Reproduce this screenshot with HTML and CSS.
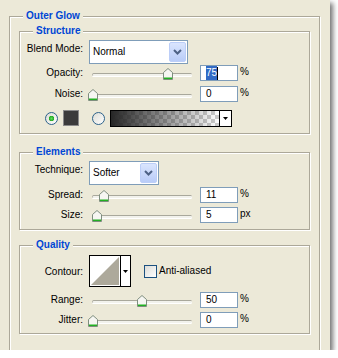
FILE: index.html
```html
<!DOCTYPE html>
<html>
<head>
<meta charset="utf-8">
<link rel="stylesheet" href="styles.css">
</head>
<body>
<div class="panel">
  <div class="group outer">
    <div class="legend">Outer Glow</div>

    <div class="group inner g-structure">
      <div class="legend">Structure</div>
      <div class="row row-select r-first">
        <span class="label">Blend Mode:</span>
        <div class="select w-blend"><span class="select-text">Normal</span><span class="select-btn"><svg width="9" height="6" viewBox="0 0 9 6"><path d="M1 1 L4.5 4.5 L8 1" fill="none" stroke="#4D6185" stroke-width="2"/></svg></span></div>
      </div>
      <div class="row row-slider r-opacity">
        <span class="label">Opacity:</span>
        <div class="slider"><div class="track"></div><svg class="thumb" style="left:75px" width="10" height="12" viewBox="0 0 10 12"><path d="M0.5 4.5 L5 0.5 L9.5 4.5 V11.5 H0.5 Z" fill="#F6F6F2" stroke="#7E8E7E"/><rect x="1" y="9.5" width="8" height="1.5" fill="#22B022"/></svg></div>
        <div class="input"><span class="sel">75</span><span class="caret"></span></div>
        <span class="unit">%</span>
      </div>
      <div class="row row-slider r-noise">
        <span class="label">Noise:</span>
        <div class="slider"><div class="track"></div><svg class="thumb" style="left:0px" width="10" height="12" viewBox="0 0 10 12"><path d="M0.5 4.5 L5 0.5 L9.5 4.5 V11.5 H0.5 Z" fill="#F6F6F2" stroke="#7E8E7E"/><rect x="1" y="9.5" width="8" height="1.5" fill="#22B022"/></svg></div>
        <div class="input">0</div>
        <span class="unit">%</span>
      </div>
      <div class="row row-color">
        <span class="radio checked"></span>
        <span class="swatch"></span>
        <span class="radio r2"></span>
        <div class="gradient"><span class="grad-fill"></span><span class="grad-btn"><svg width="5" height="3" viewBox="0 0 5 3"><path d="M0 0 H5 L2.5 3 Z" fill="#000"/></svg></span></div>
      </div>
    </div>

    <div class="group inner g-elements">
      <div class="legend">Elements</div>
      <div class="row row-select r-first">
        <span class="label">Technique:</span>
        <div class="select w-tech"><span class="select-text">Softer</span><span class="select-btn"><svg width="9" height="6" viewBox="0 0 9 6"><path d="M1 1 L4.5 4.5 L8 1" fill="none" stroke="#4D6185" stroke-width="2"/></svg></span></div>
      </div>
      <div class="row row-slider r-spread">
        <span class="label">Spread:</span>
        <div class="slider"><div class="track"></div><svg class="thumb" style="left:11px" width="10" height="12" viewBox="0 0 10 12"><path d="M0.5 4.5 L5 0.5 L9.5 4.5 V11.5 H0.5 Z" fill="#F6F6F2" stroke="#7E8E7E"/><rect x="1" y="9.5" width="8" height="1.5" fill="#22B022"/></svg></div>
        <div class="input">11</div>
        <span class="unit">%</span>
      </div>
      <div class="row row-slider r-size">
        <span class="label">Size:</span>
        <div class="slider"><div class="track"></div><svg class="thumb" style="left:4px" width="10" height="12" viewBox="0 0 10 12"><path d="M0.5 4.5 L5 0.5 L9.5 4.5 V11.5 H0.5 Z" fill="#F6F6F2" stroke="#7E8E7E"/><rect x="1" y="9.5" width="8" height="1.5" fill="#22B022"/></svg></div>
        <div class="input">5</div>
        <span class="unit">px</span>
      </div>
    </div>

    <div class="group inner g-quality">
      <div class="legend">Quality</div>
      <div class="row row-contour">
        <span class="label">Contour:</span>
        <div class="contour"><span class="contour-preview"><span class="contour-curve"></span></span><span class="contour-btn"><svg width="5" height="3" viewBox="0 0 5 3"><path d="M0 0 H5 L2.5 3 Z" fill="#000"/></svg></span></div>
        <span class="checkbox"></span>
        <span class="cb-label">Anti-aliased</span>
      </div>
      <div class="row row-slider r-range">
        <span class="label">Range:</span>
        <div class="slider"><div class="track"></div><svg class="thumb" style="left:49px" width="10" height="12" viewBox="0 0 10 12"><path d="M0.5 4.5 L5 0.5 L9.5 4.5 V11.5 H0.5 Z" fill="#F6F6F2" stroke="#7E8E7E"/><rect x="1" y="9.5" width="8" height="1.5" fill="#22B022"/></svg></div>
        <div class="input">50</div>
        <span class="unit">%</span>
      </div>
      <div class="row row-slider r-jitter">
        <span class="label">Jitter:</span>
        <div class="slider"><div class="track"></div><svg class="thumb" style="left:0px" width="10" height="12" viewBox="0 0 10 12"><path d="M0.5 4.5 L5 0.5 L9.5 4.5 V11.5 H0.5 Z" fill="#F6F6F2" stroke="#7E8E7E"/><rect x="1" y="9.5" width="8" height="1.5" fill="#22B022"/></svg></div>
        <div class="input">0</div>
        <span class="unit">%</span>
      </div>
    </div>
  </div>
</div>
</body>
</html>
```
FILE: styles.css
```css
* { box-sizing: border-box; }
html, body { margin: 0; padding: 0; background: #fff; }
body {
  font-family: "Liberation Sans", Arial, sans-serif;
  font-size: 10px;
  line-height: 12px;
  color: #000;
}
.panel {
  width: 330px;
  height: 350px;
  background: #ECE9D8;
  overflow: hidden;
  box-shadow: 3px 3px 5px rgba(0, 0, 0, 0.55);
}
.group {
  border: 1px solid #ACA899;
  box-shadow: 1px 1px 0 #fff, inset 1px 1px 0 #fff;
}
.outer {
  margin: 16px 0 0 9px;
  width: 311px;
  padding-bottom: 40px;
}
.inner { margin: 0 9px; }
.g-structure { margin-top: 9px; padding-bottom: 6px; }
.g-elements { margin-top: 18px; padding-bottom: 6px; }
.g-quality { margin-top: 15px; padding-bottom: 5px; }

.legend {
  width: fit-content;
  height: 12px;
  margin: -7px 0 0 13px;
  padding: 0 3px;
  background: #ECE9D8;
  color: #0046D5;
  font-weight: bold;
}

.row { display: flex; align-items: flex-start; }
.label { width: 63px; flex: none; text-align: right; }

/* select rows */
.row-select { height: 24px; }
.r-first { margin-top: 3px; }
.g-quality .row-contour { margin-top: 4px; }
.row-select .label { margin-top: 3px; }
.select {
  display: flex;
  align-items: center;
  height: 24px;
  margin-left: 6px;
  border: 1px solid #7F9DB9;
  background: #fff;
  padding-left: 3px;
}
.w-blend { width: 99px; }
.w-tech { width: 70px; }
.select-btn {
  margin-left: auto;
  margin-right: 1px;
  width: 17px;
  height: 20px;
  border: 1px solid #BCCEF8;
  border-radius: 2px;
  background: linear-gradient(#DAE5FE, #B9CCF8);
  display: flex;
  align-items: center;
  justify-content: center;
}
.select-btn svg { display: block; }

/* slider rows */
.row-slider { height: 16px; }
.row-slider .label { margin-top: 2px; }
.r-opacity { margin-top: 1px; }
.r-noise { margin-top: 5px; }
.r-spread { margin-top: 2px; }
.r-size { margin-top: 4px; }
.r-range { margin-top: 5px; }
.r-jitter { margin-top: 4px; }
.slider {
  position: relative;
  width: 108px;
  height: 16px;
  margin-left: 5px;
  flex: none;
}
.track {
  position: absolute;
  left: 4px;
  top: 8px;
  width: 100px;
  height: 3px;
  border-radius: 2px;
  background: #F2F2EC;
  border-top: 1px solid #A9A89C;
  border-left: 1px solid #B5B4A8;
  box-shadow: 0 1px 0 #fff;
}
.thumb { position: absolute; top: 3px; display: block; }
.input {
  width: 38px;
  height: 16px;
  margin-left: 4px;
  border: 1px solid #7F9DB9;
  background: #fff;
  padding: 0 0 0 5px;
  line-height: 14px;
  display: flex;
  align-items: center;
  flex: none;
}
.sel {
  background: #316AC5;
  color: #fff;
  height: 14px;
  line-height: 14px;
}
.caret { width: 1px; height: 13px; background: #000; }
.unit { margin: 1px 0 0 2px; }

/* color row */
.row-color { height: 17px; margin-top: 8px; padding-left: 25px; }
.radio {
  width: 13px;
  height: 13px;
  margin-top: 2px;
  border-radius: 50%;
  border: 1px solid #2C628B;
  background: linear-gradient(135deg, #DCDCD5, #FFFFFF);
  flex: none;
}
.radio.checked {
  background: radial-gradient(circle at 50% 50%, #5FE05F 0, #22A822 2.5px, transparent 3px), linear-gradient(135deg, #DCDCD5, #FFFFFF);
}
.swatch {
  width: 16px;
  height: 16px;
  margin-left: 5px;
  border: 1px solid #8A8A8A;
  background: #3B3B3B;
  flex: none;
}
.r2 { margin-left: 13px; }
.gradient {
  width: 122px;
  height: 17px;
  margin-left: 5px;
  border: 1px solid #000;
  display: flex;
  background: #fff;
}
.grad-fill {
  flex: 1;
  background:
    linear-gradient(to right, rgba(38, 38, 38, 1), rgba(38, 38, 38, 0)),
    repeating-conic-gradient(#CCCCCC 0 25%, #FFFFFF 0 50%) 0 0 / 8px 8px;
}
.grad-btn {
  width: 12px;
  border-left: 1px solid #000;
  background: #fff;
  display: flex;
  align-items: center;
  justify-content: center;
}
.grad-btn svg, .contour-btn svg { display: block; }

/* contour row */
.row-contour { height: 32px; }
.row-contour .label { margin-top: 11px; }
.contour {
  width: 42px;
  height: 32px;
  margin-left: 6px;
  border: 1px solid #000;
  background: #fff;
  display: flex;
}
.contour-preview {
  width: 30px;
  height: 100%;
  padding: 1px;
  background: #fff;
}
.contour-curve {
  display: block;
  width: 100%;
  height: 100%;
  background: linear-gradient(to bottom right, #FFFFFF 49.5%, #ADA99B 50.5%);
}
.contour-btn {
  flex: 1;
  border-left: 1px solid #000;
  background: #fff;
  display: flex;
  align-items: center;
  justify-content: center;
}
.checkbox {
  width: 13px;
  height: 13px;
  margin: 10px 0 0 13px;
  border: 1px solid #1C5180;
  background: linear-gradient(135deg, #DCDCD7, #FFFFFF);
  flex: none;
}
.cb-label { margin: 10px 0 0 2px; }
```
